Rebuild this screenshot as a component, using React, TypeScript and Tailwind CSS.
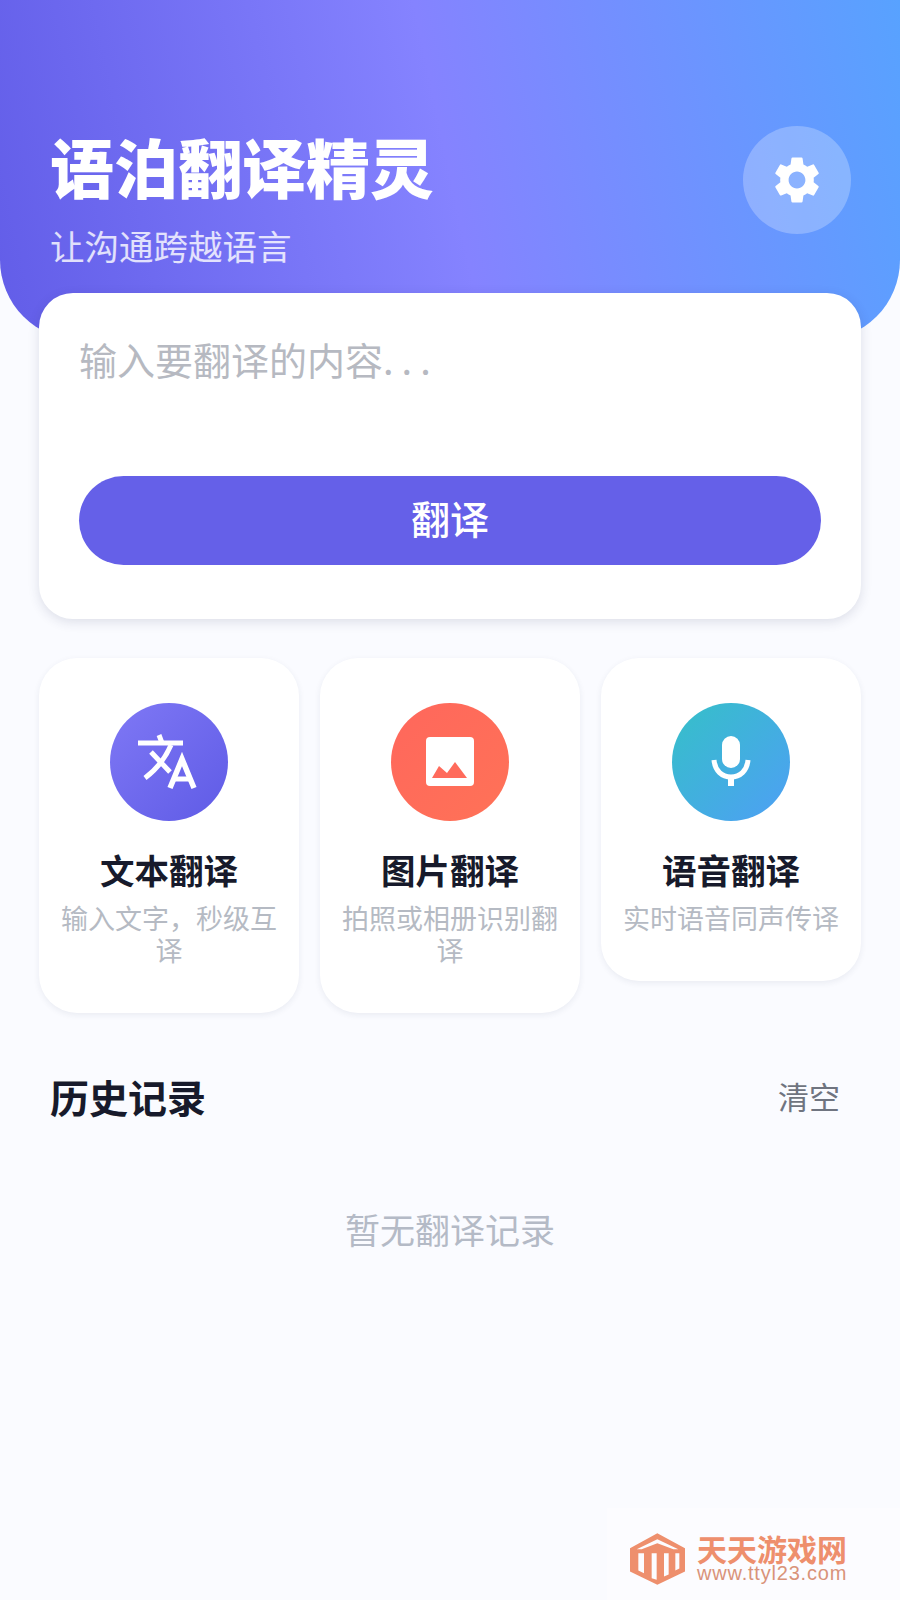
import React from 'react';
import { MdSettings } from 'react-icons/md';

const cjk = "font-['Noto_Sans_CJK_SC','Noto_Sans',sans-serif]";

const TranslateIcon = () => (
  <svg viewBox="0 0 118 118" className="w-[118px] h-[118px] -ml-px" fill="none" stroke="#fff" strokeWidth={5}>
    <path d="M29 40H74" />
    <path d="M50 32l3 8" />
    <path d="M42 49L61 69" />
    <path d="M62 42C56 56 48 66 36 75" />
    <path d="M61 85L73 56L85 85" strokeWidth={5.5} />
    <path d="M65 76H81" />
  </svg>
);

const ImageIcon = () => (
  <svg viewBox="0 0 118 118" className="w-[118px] h-[118px]">
    <rect x="35" y="34" width="48" height="49" rx="4" fill="#fff" />
    <path d="M41 75L48 63L56 70L64 59L76 75Z" fill="#ff6b5c" />
  </svg>
);

const MicIcon = () => (
  <svg viewBox="0 0 118 118" className="w-[118px] h-[118px]" fill="none">
    <rect x="50" y="33" width="18" height="32" rx="9" fill="#fff" />
    <path d="M42 57c1 11 8 17 17 17s16-6 17-17" stroke="#fff" strokeWidth={5} />
    <path d="M59 72V83" stroke="#fff" strokeWidth={6} />
  </svg>
);

const features = [
  {
    title: '文本翻译',
    desc: '输入文字，秒级互译',
    circle: 'bg-[linear-gradient(135deg,#7f78f5,#5f5be6)]',
    icon: <TranslateIcon />,
  },
  {
    title: '图片翻译',
    desc: '拍照或相册识别翻译',
    circle: 'bg-[linear-gradient(135deg,#ff675c,#ff7257)]',
    icon: <ImageIcon />,
  },
  {
    title: '语音翻译',
    desc: '实时语音同声传译',
    circle: 'bg-[linear-gradient(135deg,#35c0c8,#4e9ff5)]',
    icon: <MicIcon />,
  },
];

const Watermark = () => (
  <div className="absolute right-0 bottom-0 w-[293px] h-[92px] bg-white/40 flex items-center gap-[12px] pl-[23px] pt-[10px]">
    <svg viewBox="0 0 165 155" className="w-[55px] h-[52px] shrink-0">
      <path
        d="M82 0L165 45V115L82 155L0 115V45Z M82 18L20 48H35L82 30L130 48H145Z M25 60V112L42 120V60Z M65 60V135L80 140V60Z M102 60V130L116 124V60Z M136 60V112L148 106V60Z"
        fill="#ee8f6d"
        fillRule="evenodd"
      />
    </svg>
    <div className="flex flex-col">
      <div className={`${cjk} text-[30px] leading-[26px] font-bold text-[#ee8f6d]`}>天天游戏网</div>
      <div className="mt-[2px] font-['Liberation_Sans',sans-serif] text-[20px] leading-[20px] text-[#d9937a] tracking-[0.8px]">
        www.ttyl23.com
      </div>
    </div>
  </div>
);

export default function App() {
  return (
    <div className={`${cjk} relative w-[900px] h-[1600px] overflow-hidden bg-[#fafbff]`}>
      <header className="h-[340px] rounded-b-[80px] bg-[linear-gradient(78deg,#625de8_0%,#8583ff_50%,#58a2ff_100%)] pt-[126px] pl-[50px] pr-[49px] flex justify-between items-start">
        <div className="pt-[1px]">
          <h1 className="text-[64px] leading-[76px] font-black text-white">语泊翻译精灵</h1>
          <p className="mt-[20px] text-[34.5px] leading-[44px] text-white/80">让沟通跨越语言</p>
        </div>
        <button className="w-[108px] h-[108px] rounded-full bg-white/25 flex items-center justify-center">
          <MdSettings size={56} color="#fff" />
        </button>
      </header>

      <main className="px-[39px]">
        <section className="-mt-[47px] relative h-[326px] rounded-[34px] bg-white px-[40px] pt-[43px] shadow-[0_3px_12px_rgba(40,50,90,0.14)]">
          <div className="h-[140px] text-[38px] leading-[46px] text-[#b6b9c1]">
            输入要翻译的内容<span className="tracking-[8px]">...</span>
          </div>
          <button className="w-full h-[89px] rounded-full bg-[#6560e8] pb-[6px] text-[39px] font-medium text-white">翻译</button>
        </section>

        <section className="mt-[39px] grid grid-cols-3 gap-x-[21px] items-start">
          {features.map((f) => (
            <div
              key={f.title}
              className="rounded-[38px] bg-white pt-[45px] pb-[47px] px-[20px] flex flex-col items-center text-center shadow-[0_2px_6px_rgba(40,50,90,0.08)]"
            >
              <div className={`w-[118px] h-[118px] rounded-full ${f.circle}`}>{f.icon}</div>
              <h3 className="mt-[25px] text-[34.5px] leading-[46px] font-bold text-[#171a2b]">{f.title}</h3>
              <p className="mt-[10px] text-[27px] leading-[32px] text-[#b5bac3]">{f.desc}</p>
            </div>
          ))}
        </section>

        <div className="mt-[57px] flex items-center justify-between pl-[11px] pr-[21px]">
          <h2 className="text-[39px] leading-[52px] font-bold text-[#171a2b]">历史记录</h2>
          <span className="text-[31px] leading-[52px] text-[#6f7480]">清空</span>
        </div>

        <p className="mt-[84px] text-center text-[35px] leading-[46px] text-[#b4bac6]">暂无翻译记录</p>
      </main>

      <Watermark />
    </div>
  );
}
